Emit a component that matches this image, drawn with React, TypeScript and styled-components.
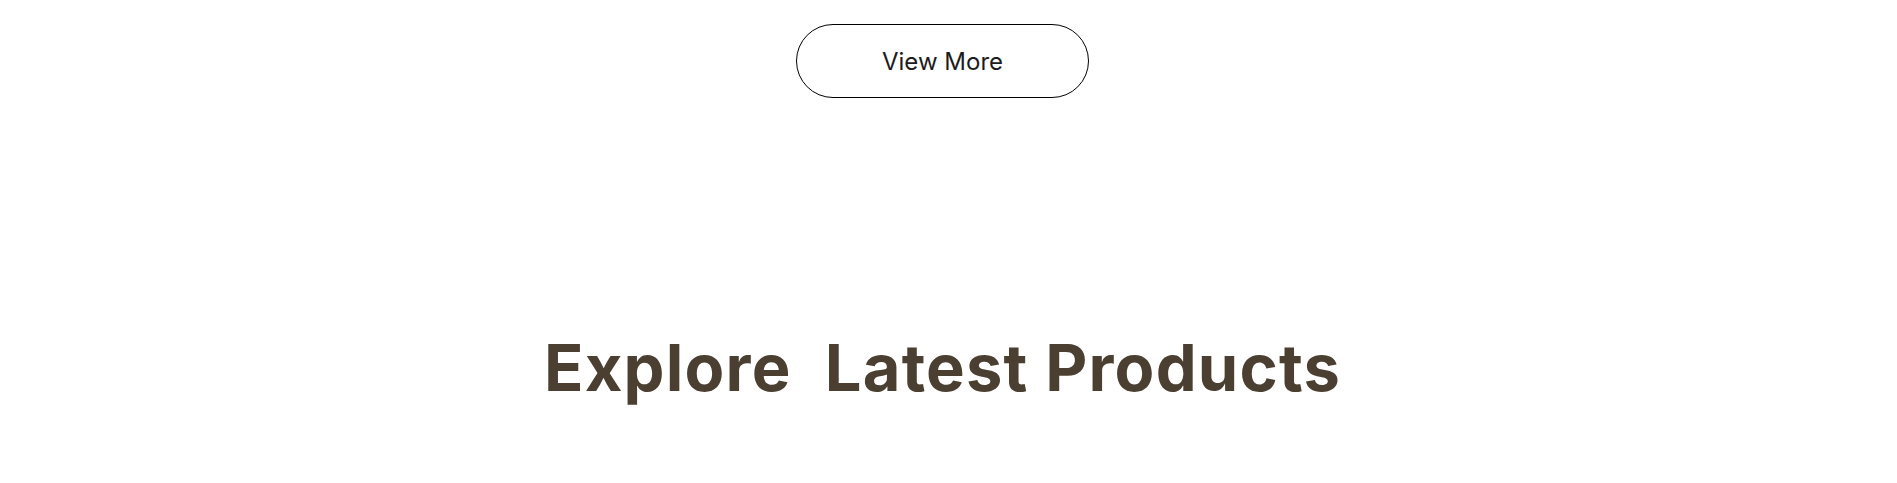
import React from 'react';
import styled, { createGlobalStyle } from 'styled-components';

const GlobalStyle = createGlobalStyle`
  body {
    margin: 0;
    background: #ffffff;
    font-family: Inter, "Liberation Sans", sans-serif;
  }
`;

const Page = styled.div`
  display: flex;
  flex-direction: column;
  align-items: center;
  padding: 24px 12px 0 0;
  height: 483px;
  box-sizing: border-box;
`;

const MoreButton = styled.button`
  width: 293px;
  height: 74px;
  border: 1px solid #000000;
  border-radius: 37px;
  background: #ffffff;
  color: #1c1c1c;
  font-family: Inter, "Liberation Sans", sans-serif;
  font-size: 24px;
  font-weight: 400;
  cursor: pointer;
`;

const Heading = styled.h2`
  margin: 237px 0 0;
  color: #4b3f31;
  font-family: Inter, "Liberation Sans", sans-serif;
  font-size: 65px;
  font-weight: 700;
  letter-spacing: 1.2px;
  line-height: 1;
  white-space: pre;
`;

const App: React.FC = () => {
  return (
    <>
      <GlobalStyle />
      <Page>
        <MoreButton>View More</MoreButton>
        <Heading>{'Explore  Latest Products'}</Heading>
      </Page>
    </>
  );
};

export default App;
